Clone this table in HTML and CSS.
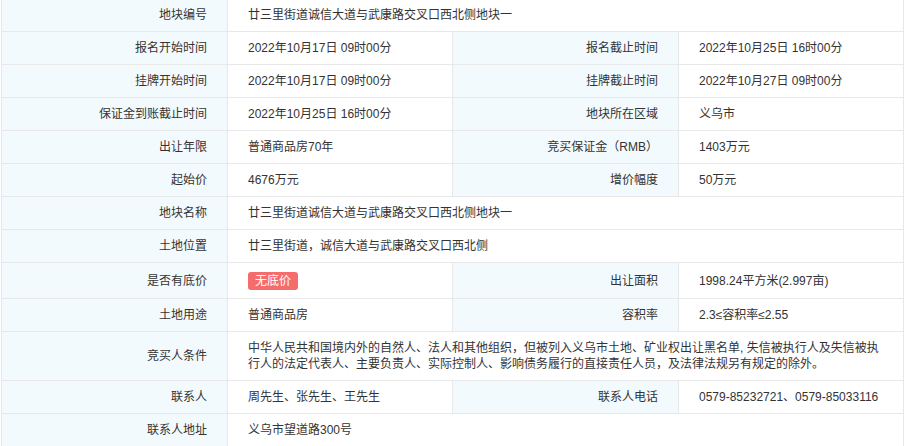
FILE: index.html
```html
<!DOCTYPE html>
<html lang="zh">
<head>
<meta charset="utf-8">
<link rel="stylesheet" href="styles.css">
</head>
<body>
<table class="info">
  <colgroup>
    <col class="c-label"><col class="c-value"><col class="c-label"><col class="c-value2">
  </colgroup>
  <tr class="first">
    <th>地块编号</th><td colspan="3">廿三里街道诚信大道与武康路交叉口西北侧地块一</td>
  </tr>
  <tr>
    <th>报名开始时间</th><td>2022年10月17日 09时00分</td>
    <th>报名截止时间</th><td>2022年10月25日 16时00分</td>
  </tr>
  <tr>
    <th>挂牌开始时间</th><td>2022年10月17日 09时00分</td>
    <th>挂牌截止时间</th><td>2022年10月27日 09时00分</td>
  </tr>
  <tr>
    <th>保证金到账截止时间</th><td>2022年10月25日 16时00分</td>
    <th>地块所在区域</th><td>义乌市</td>
  </tr>
  <tr>
    <th>出让年限</th><td>普通商品房70年</td>
    <th>竞买保证金（RMB）</th><td>1403万元</td>
  </tr>
  <tr>
    <th>起始价</th><td>4676万元</td>
    <th>增价幅度</th><td>50万元</td>
  </tr>
  <tr>
    <th>地块名称</th><td colspan="3">廿三里街道诚信大道与武康路交叉口西北侧地块一</td>
  </tr>
  <tr>
    <th>土地位置</th><td colspan="3">廿三里街道，诚信大道与武康路交叉口西北侧</td>
  </tr>
  <tr class="badge-row">
    <th>是否有底价</th><td><span class="badge">无底价</span></td>
    <th>出让面积</th><td>1998.24平方米(2.997亩)</td>
  </tr>
  <tr>
    <th>土地用途</th><td>普通商品房</td>
    <th>容积率</th><td>2.3≤容积率≤2.55</td>
  </tr>
  <tr>
    <th>竞买人条件</th><td colspan="3">中华人民共和国境内外的自然人、法人和其他组织，但被列入义乌市土地、矿业权出让黑名单, 失信被执行人及失信被执行人的法定代表人、主要负责人、实际控制人、影响债务履行的直接责任人员，及法律法规另有规定的除外。</td>
  </tr>
  <tr>
    <th>联系人</th><td>周先生、张先生、王先生</td>
    <th>联系人电话</th><td>0579-85232721、0579-85033116</td>
  </tr>
  <tr>
    <th>联系人地址</th><td colspan="3">义乌市望道路300号</td>
  </tr>
</table>
</body>
</html>
```
FILE: styles.css
```css
html, body {
  margin: 0;
  padding: 0;
  background: #fff;
}
body {
  font-family: "Liberation Sans", "Noto Sans CJK SC", sans-serif;
  font-size: 12px;
  color: #333;
}
.info {
  border-collapse: collapse;
  table-layout: fixed;
  width: 902px;
  margin-left: 1px;
}
.c-label { width: 226px; }
.c-value { width: 225px; }
.c-value2 { width: 225px; }
.info th, .info td {
  border: 1px solid #e8e8e8;
  padding: 8px 20px;
  line-height: 16px;
  font-weight: normal;
  vertical-align: middle;
}
.info th {
  text-align: right;
  background: #f3fafd;
}
.info td {
  text-align: left;
  background: #fff;
}
.info tr.first th, .info tr.first td {
  border-top: none;
  padding-top: 7px;
}
.badge {
  display: inline-block;
  height: 18px;
  line-height: 18px;
  padding: 0 7px;
  border-radius: 3px;
  background: #f56c6c;
  color: #fff;
  vertical-align: top;
  margin-top: 1px;
}
.badge-row td, .badge-row th {
  height: 19px;
}
```
